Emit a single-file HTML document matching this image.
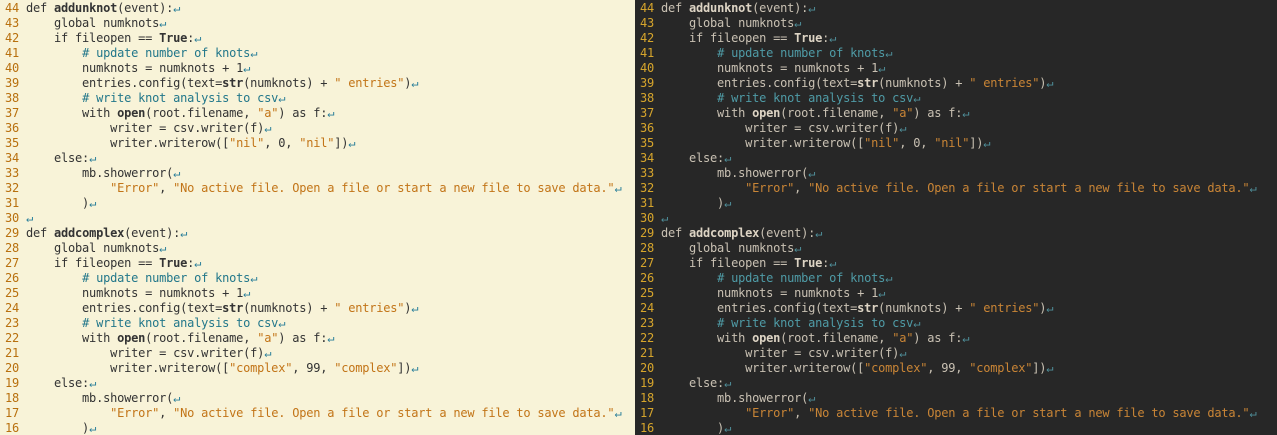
<!DOCTYPE html>
<html><head><meta charset="utf-8"><style>
html,body{margin:0;padding:0;width:1277px;height:435px;overflow:hidden}
.p{position:absolute;top:0;height:435px;overflow:hidden}
#l{left:0;width:635px;background:#f8f3d8;color:#333}
#r{left:635px;width:642px;background:#272727;color:#c9c1b3}
pre{margin:0;padding:1px 0 0 5px;font-family:"DejaVu Sans Mono","Liberation Mono",monospace;font-size:12px;letter-spacing:-0.22px;line-height:15px;white-space:pre}
b{font-weight:bold}
#l .n{color:#b8700e}#r .n{color:#d6a52c}
#l .c{color:#22778a}#r .c{color:#4f9ba6}
#l .s{color:#c27417}#r .s{color:#c98536}
#l .e{color:#2a7f9a}#r .e{color:#4f8f9a}
#r b{color:#ddd4c4}
</style></head><body>
<div class="p" id="l"><pre id="code"><span class="n">44</span> def <b>addunknot</b>(event):<span class="e">↵</span>
<span class="n">43</span>     global numknots<span class="e">↵</span>
<span class="n">42</span>     if fileopen == <b>True</b>:<span class="e">↵</span>
<span class="n">41</span>         <span class="c"># update number of knots</span><span class="e">↵</span>
<span class="n">40</span>         numknots = numknots + 1<span class="e">↵</span>
<span class="n">39</span>         entries.config(text=<b>str</b>(numknots) + <span class="s">" entries"</span>)<span class="e">↵</span>
<span class="n">38</span>         <span class="c"># write knot analysis to csv</span><span class="e">↵</span>
<span class="n">37</span>         with <b>open</b>(root.filename, <span class="s">"a"</span>) as f:<span class="e">↵</span>
<span class="n">36</span>             writer = csv.writer(f)<span class="e">↵</span>
<span class="n">35</span>             writer.writerow([<span class="s">"nil"</span>, 0, <span class="s">"nil"</span>])<span class="e">↵</span>
<span class="n">34</span>     else:<span class="e">↵</span>
<span class="n">33</span>         mb.showerror(<span class="e">↵</span>
<span class="n">32</span>             <span class="s">"Error"</span>, <span class="s">"No active file. Open a file or start a new file to save data."</span><span class="e">↵</span>
<span class="n">31</span>         )<span class="e">↵</span>
<span class="n">30</span> <span class="e">↵</span>
<span class="n">29</span> def <b>addcomplex</b>(event):<span class="e">↵</span>
<span class="n">28</span>     global numknots<span class="e">↵</span>
<span class="n">27</span>     if fileopen == <b>True</b>:<span class="e">↵</span>
<span class="n">26</span>         <span class="c"># update number of knots</span><span class="e">↵</span>
<span class="n">25</span>         numknots = numknots + 1<span class="e">↵</span>
<span class="n">24</span>         entries.config(text=<b>str</b>(numknots) + <span class="s">" entries"</span>)<span class="e">↵</span>
<span class="n">23</span>         <span class="c"># write knot analysis to csv</span><span class="e">↵</span>
<span class="n">22</span>         with <b>open</b>(root.filename, <span class="s">"a"</span>) as f:<span class="e">↵</span>
<span class="n">21</span>             writer = csv.writer(f)<span class="e">↵</span>
<span class="n">20</span>             writer.writerow([<span class="s">"complex"</span>, 99, <span class="s">"complex"</span>])<span class="e">↵</span>
<span class="n">19</span>     else:<span class="e">↵</span>
<span class="n">18</span>         mb.showerror(<span class="e">↵</span>
<span class="n">17</span>             <span class="s">"Error"</span>, <span class="s">"No active file. Open a file or start a new file to save data."</span><span class="e">↵</span>
<span class="n">16</span>         )<span class="e">↵</span></pre></div>
<div class="p" id="r"><pre><span class="n">44</span> def <b>addunknot</b>(event):<span class="e">↵</span>
<span class="n">43</span>     global numknots<span class="e">↵</span>
<span class="n">42</span>     if fileopen == <b>True</b>:<span class="e">↵</span>
<span class="n">41</span>         <span class="c"># update number of knots</span><span class="e">↵</span>
<span class="n">40</span>         numknots = numknots + 1<span class="e">↵</span>
<span class="n">39</span>         entries.config(text=<b>str</b>(numknots) + <span class="s">" entries"</span>)<span class="e">↵</span>
<span class="n">38</span>         <span class="c"># write knot analysis to csv</span><span class="e">↵</span>
<span class="n">37</span>         with <b>open</b>(root.filename, <span class="s">"a"</span>) as f:<span class="e">↵</span>
<span class="n">36</span>             writer = csv.writer(f)<span class="e">↵</span>
<span class="n">35</span>             writer.writerow([<span class="s">"nil"</span>, 0, <span class="s">"nil"</span>])<span class="e">↵</span>
<span class="n">34</span>     else:<span class="e">↵</span>
<span class="n">33</span>         mb.showerror(<span class="e">↵</span>
<span class="n">32</span>             <span class="s">"Error"</span>, <span class="s">"No active file. Open a file or start a new file to save data."</span><span class="e">↵</span>
<span class="n">31</span>         )<span class="e">↵</span>
<span class="n">30</span> <span class="e">↵</span>
<span class="n">29</span> def <b>addcomplex</b>(event):<span class="e">↵</span>
<span class="n">28</span>     global numknots<span class="e">↵</span>
<span class="n">27</span>     if fileopen == <b>True</b>:<span class="e">↵</span>
<span class="n">26</span>         <span class="c"># update number of knots</span><span class="e">↵</span>
<span class="n">25</span>         numknots = numknots + 1<span class="e">↵</span>
<span class="n">24</span>         entries.config(text=<b>str</b>(numknots) + <span class="s">" entries"</span>)<span class="e">↵</span>
<span class="n">23</span>         <span class="c"># write knot analysis to csv</span><span class="e">↵</span>
<span class="n">22</span>         with <b>open</b>(root.filename, <span class="s">"a"</span>) as f:<span class="e">↵</span>
<span class="n">21</span>             writer = csv.writer(f)<span class="e">↵</span>
<span class="n">20</span>             writer.writerow([<span class="s">"complex"</span>, 99, <span class="s">"complex"</span>])<span class="e">↵</span>
<span class="n">19</span>     else:<span class="e">↵</span>
<span class="n">18</span>         mb.showerror(<span class="e">↵</span>
<span class="n">17</span>             <span class="s">"Error"</span>, <span class="s">"No active file. Open a file or start a new file to save data."</span><span class="e">↵</span>
<span class="n">16</span>         )<span class="e">↵</span></pre></div>
</body></html>
